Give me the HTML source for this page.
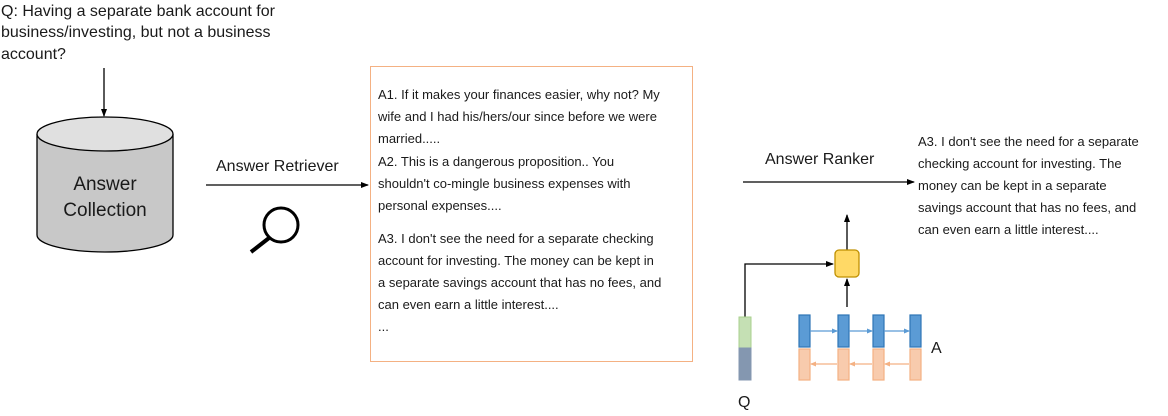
<!DOCTYPE html>
<html><head><meta charset="utf-8"><style>
body{margin:0;width:1168px;height:416px;background:#fff;position:relative;overflow:hidden;font-family:"Liberation Sans",sans-serif;color:#1a1a1a}
.t{position:absolute;white-space:nowrap;line-height:1}
.q{font-size:16px}
.b{font-size:13px}
</style></head><body>
<div class="t q" style="left:1px;top:4px">Q: Having a separate bank account for</div>
<div class="t q" style="left:1px;top:25px">business/investing, but not a business</div>
<div class="t q" style="left:1px;top:47px">account?</div>

<div class="t q" style="left:216px;top:159px">Answer Retriever</div>
<div class="t q" style="left:765px;top:152px">Answer Ranker</div>

<div style="position:absolute;left:370px;top:66px;width:321px;height:294px;border:1.5px solid #f4b183"></div>
<div class="t b" style="left:378px;top:88px">A1. If it makes your finances easier, why not? My</div>
<div class="t b" style="left:378px;top:110px">wife and I had his/hers/our since before we were</div>
<div class="t b" style="left:378px;top:132px">married.....</div>
<div class="t b" style="left:378px;top:155px">A2. This is a dangerous proposition.. You</div>
<div class="t b" style="left:378px;top:177px">shouldn't co-mingle business expenses with</div>
<div class="t b" style="left:378px;top:199px">personal expenses....</div>
<div class="t b" style="left:378px;top:232px">A3. I don't see the need for a separate checking</div>
<div class="t b" style="left:378px;top:254px">account for investing. The money can be kept in</div>
<div class="t b" style="left:378px;top:276px">a separate savings account that has no fees, and</div>
<div class="t b" style="left:378px;top:298px">can even earn a little interest....</div>
<div class="t b" style="left:378px;top:320px">...</div>

<div class="t b" style="left:918px;top:135px">A3. I don't see the need for a separate</div>
<div class="t b" style="left:918px;top:157px">checking account for investing. The</div>
<div class="t b" style="left:918px;top:179px">money can be kept in a separate</div>
<div class="t b" style="left:918px;top:201px">savings account that has no fees, and</div>
<div class="t b" style="left:918px;top:223px">can even earn a little interest....</div>

<div class="t q" style="left:931px;top:341px">A</div>
<div class="t q" style="left:738px;top:395px">Q</div>

<svg width="1168" height="416" style="position:absolute;left:0;top:0">
<defs><marker id="ar" markerWidth="8" markerHeight="8" refX="7" refY="4" orient="auto" markerUnits="userSpaceOnUse"><path d="M0,1 L8,4 L0,7z" fill="#000"/></marker>
<marker id="ab" markerWidth="6" markerHeight="6" refX="5" refY="3" orient="auto" markerUnits="userSpaceOnUse"><path d="M0,0.5 L6,3 L0,5.5z" fill="#5b9bd5"/></marker>
<marker id="ao" markerWidth="6" markerHeight="6" refX="5" refY="3" orient="auto" markerUnits="userSpaceOnUse"><path d="M0,0.5 L6,3 L0,5.5z" fill="#f4b183"/></marker></defs>
<line x1="104" y1="68" x2="104" y2="116" stroke="#000" stroke-width="1.3" marker-end="url(#ar)"/>
<path d="M37,134 L37,235 A68,17 0 0 0 173,235 L173,134" fill="#c8c8c8" stroke="#000" stroke-width="1.3"/>
<ellipse cx="105" cy="134" rx="68" ry="17" fill="#e0e0e0" stroke="#000" stroke-width="1.3"/>
<text x="105" y="190" font-size="19" text-anchor="middle" font-family="Liberation Sans" fill="#1a1a1a">Answer</text>
<text x="105" y="216" font-size="19" text-anchor="middle" font-family="Liberation Sans" fill="#1a1a1a">Collection</text>
<line x1="206" y1="185" x2="368" y2="185" stroke="#000" stroke-width="1.3" marker-end="url(#ar)"/>
<circle cx="281" cy="225" r="17" fill="none" stroke="#000" stroke-width="3"/>
<line x1="269" y1="238" x2="251" y2="252" stroke="#000" stroke-width="4"/>
<line x1="743" y1="182" x2="914" y2="182" stroke="#000" stroke-width="1.3" marker-end="url(#ar)"/>
<polyline points="745,317 745,264 833,264" fill="none" stroke="#000" stroke-width="1.3" marker-end="url(#ar)"/>
<line x1="847" y1="307" x2="847" y2="279" stroke="#000" stroke-width="1.3" marker-end="url(#ar)"/>
<line x1="847" y1="250" x2="847" y2="215" stroke="#000" stroke-width="1.3" marker-end="url(#ar)"/>
<rect x="835" y="250" width="24" height="27" rx="4" fill="#ffd966" stroke="#bf9000" stroke-width="1.3"/>
<rect x="739" y="317" width="12" height="31" fill="#c5e0b4" stroke="#a9d18e"/>
<rect x="739" y="348" width="12" height="32" fill="#8497b0" stroke="#8497b0"/>
<g fill="#5b9bd5" stroke="#2e75b6" stroke-width="1.2">
<rect x="799" y="315" width="11" height="32"/><rect x="838" y="315" width="11" height="32"/><rect x="873" y="315" width="11" height="32"/><rect x="910" y="315" width="11" height="32"/></g>
<g fill="#f8cbad" stroke="#f4b183" stroke-width="1.2">
<rect x="799" y="349" width="11" height="31"/><rect x="838" y="349" width="11" height="31"/><rect x="873" y="349" width="11" height="31"/><rect x="910" y="349" width="11" height="31"/></g>
<g stroke="#5b9bd5" stroke-width="1.3"><line x1="810" y1="331" x2="837" y2="331" marker-end="url(#ab)"/><line x1="849" y1="331" x2="872" y2="331" marker-end="url(#ab)"/><line x1="884" y1="331" x2="909" y2="331" marker-end="url(#ab)"/></g>
<g stroke="#f4b183" stroke-width="1.3"><line x1="837" y1="364" x2="811" y2="364" marker-end="url(#ao)"/><line x1="872" y1="364" x2="850" y2="364" marker-end="url(#ao)"/><line x1="909" y1="364" x2="885" y2="364" marker-end="url(#ao)"/></g>
</svg>
</body></html>
